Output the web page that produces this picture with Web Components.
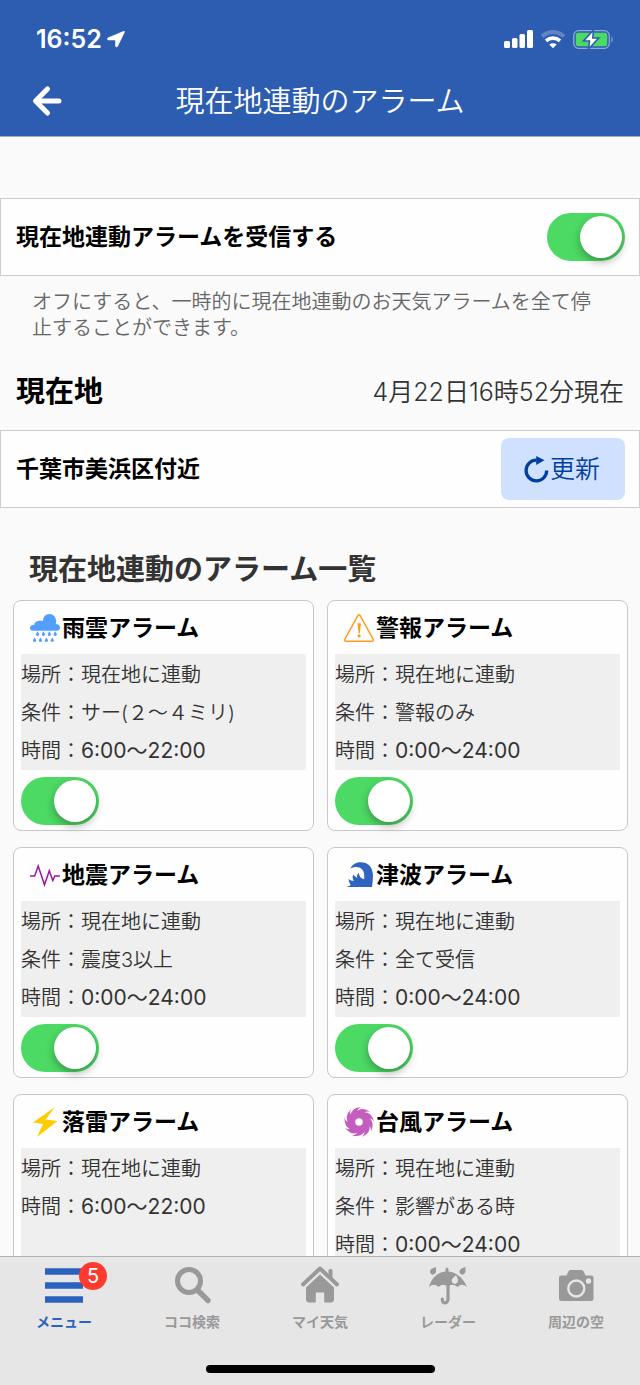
<!DOCTYPE html>
<html lang="ja">
<head>
<meta charset="utf-8">
<meta name="viewport" content="width=device-width, initial-scale=1">
<title>現在地連動のアラーム</title>
<style>
  html, body { margin: 0; height: 100%; }
  body {
    background: #fafafa;
    color: #333;
    font-family: Inter, "Noto Sans CJK JP", sans-serif;
    font-size: 20px;
  }
</style>
</head>
<body>
<alarm-app></alarm-app>

<script>
const ICONS = {
  location: [18, 16, '<path d="M17 .8 10.200 15q-.9.800-1.200-.2V8.500H1.500Q.4 8 1.500 7.200Z" fill="currentColor" stroke="currentColor" stroke-width="1.600" stroke-linejoin="round"/>'],
  back: [30, 30, '<path d="M15.500 3 3.500 15l12 12M4.500 15H27" fill="none" stroke="currentColor" stroke-width="5" stroke-linecap="round" stroke-linejoin="round"/>'],
  signal: [29, 18, '<g fill="currentColor"><rect y="11" width="6" height="7" rx="1.500"/><rect x="8" y="8" width="5.500" height="10" rx="1.500"/><rect x="15.500" y="4" width="5.500" height="14" rx="1.500"/><rect x="23" width="6" height="18" rx="1.500"/></g>'],
  wifi: [26, 18, '<path d="M2 6.500a16 16 0 0 1 22 0" fill="none" stroke="currentColor" stroke-opacity=".25" stroke-width="4"/><path d="M6 10.800a10.500 10.500 0 0 1 14 0" fill="none" stroke="currentColor" stroke-width="3.600"/><path d="M9.300 14.600a5.500 5.500 0 0 1 7.400 0L13 18.200Z" fill="currentColor"/>'],
  battery: [41, 19, '<rect x=".7" y=".7" width="35.600" height="17.600" rx="5" fill="none" stroke="#8ea9d8" stroke-width="1.300"/><path d="M38.500 6q2.500 3.500 0 7Z" fill="#8ea9d8"/><rect x="2.800" y="2.800" width="31.400" height="13.400" rx="2.500" fill="#4cd964"/><path d="M20.500 0 10.500 11h6L15.500 19 25.800 8h-6Z" fill="#fff" stroke="#2c5db1" stroke-width="1.600"/>'],
  refresh: [25, 26, '<path d="M12.500 4.200A10.300 10.300 0 1 0 22.700 14.500" fill="none" stroke="currentColor" stroke-width="3.300"/><path d="M12.200 0 20.500 4.200 12.200 9Z" fill="currentColor"/>'],
  rain: [30, 28, '<g transform="scale(.327 .334)" fill="#529fff"><path d="M9 50Q0 49 0 41q1-9 13-9 1-11 15-12 5-1 11 2Q40 1 60 0q18 1 20 21l-1 9q12 1 13 11-1 9-10 9Z"/><path d="M23 52q6 8 5 11-5 5-10 0 0-4 5-11ZM41 52q6 8 5 11-5 5-10 0 0-4 5-11ZM59 52q6 8 5 11-5 5-10 0 0-4 5-11ZM77 52q6 8 5 11-5 5-10 0 0-4 5-11ZM14 70q6 8 5 11-5 5-10 0 0-4 5-11ZM32 70q6 8 5 11-5 5-10 0 0-4 5-11ZM50 70q6 8 5 11-5 5-10 0 0-4 5-11ZM68 70q6 8 5 11-5 5-10 0 0-4 5-11Z"/></g>'],
  warning: [30, 28, '<path d="M15 .8q.5 0 1 .7l13.300 24q.4 1.600-1 1.700H1.700q-1.400-.1-1-1.700l13.300-24q.5-.7 1-.7Z" fill="none" stroke="#ff9b1c" stroke-width="1.500"/><path d="M13.500 9.500q1.700-1 3.400 0l-.9 9.500h-1.400Z" fill="#ff9b1c"/><circle cx="15.200" cy="21.800" r="1.600" fill="#ff9b1c"/>'],
  quake: [30, 28, '<path d="M0 15h4.700L8.200 5l6.300 18.800 4.800-14 3.500 9.700 2-4.500h5.200" fill="none" stroke="#a0149b" stroke-width="1.500"/>'],
  wave: [30, 28, '<g transform="translate(2 1) scale(.333)"><path d="M0 75H78Q81 58 81 40C80 14 65 1 44 1 29 1 18 9 13 20 26 13 40 14 48 22 57 31 54 43 55 52 45 50 40 43 38 32 33 38 32 43 34 48 28 44 24 40 22 38 18 45 20 51 24 56 18 57 13 55 7 51 9 60 12 66 14 68 10 72 5 74 0 75Z" fill="#3064c0"/></g>'],
  bolt: [30, 30, '<path d="m25 0-9.500 12.500L27.500 14 7 30l6-13L3 15.500Z" fill="#fc0"/>'],
  typhoon: [30, 30, '<g fill="#c45dbd">' +
    [0, 40, 80, 120, 160, 200, 240, 280, 320].map(a => `<path transform="rotate(${a} 15 15)" d="M6 11Q6 1 17 0 11 3 14 8Z"/>`).join('') +
    '</g><circle cx="15" cy="15" r="6.500" fill="none" stroke="#c45dbd" stroke-width="5.500"/>'],
  menu: [40, 38, '<path d="M1 4.500h38M1 18.500h38M1 32.500h38" fill="none" stroke="currentColor" stroke-width="6.600"/>'],
  search: [40, 38, '<g fill="none" stroke="currentColor"><circle cx="17" cy="14" r="11.500" stroke-width="5"/><path d="m26 23.500 10 10" stroke-width="5.400" stroke-linecap="round"/></g>'],
  home: [40, 38, '<path d="m3 17.500 17-16 17 16" fill="none" stroke="currentColor" stroke-width="4" stroke-linecap="round" stroke-linejoin="round"/><path d="M28.500 3q2-2 4 0v8l-4-4ZM20 7.500 34 20.500V32q0 3.500-3.500 3.500H25q-.8 0-.8-1V25.500h-8.400v9q0 1-.8 1H9.500Q6 35.500 6 32V20.500Z" fill="currentColor"/>'],
  umbrella: [40, 38, '<path d="M1 20Q5 6 17.500 4.500V2q1.500-3 3 0v2.500Q33 6 39 20q-5-4.500-9.500 0Q24 15.500 20 20q-5-4.500-9.500 0Q6 15.500 1 20Z" fill="currentColor"/><path d="M20 18v14.500q-.8 4.500-4.500 3-1.200-.5-1.200-3.500" fill="none" stroke="currentColor" stroke-width="3.200" stroke-linecap="round"/><path d="M8 0v5q-2 4-5 2-2.500-3 1-5.500ZM37.500 0v5q-2 4-5 2-2.500-3 1-5.500Z" fill="currentColor"/><path d="M28 8q4 7-.5 9-5-.5-3.500-5Z" fill="#e6e6e6"/>'],
  camera: [40, 38, '<path d="M5 8.500h5.500l1.800-4Q13 3 14.500 3h11q1.500 0 2.200 1.500l1.800 4H35q2.500 0 2.500 2.500v20.500Q37.500 34 35 34H5.500Q3 34 3 31.500V11Q3 8.500 5 8.500Z" fill="currentColor"/><circle cx="20.300" cy="21.500" r="8" fill="none" stroke="#e6e6e6" stroke-width="2.400"/><circle cx="32.500" cy="14" r="2.700" fill="#e6e6e6"/>'],
};

class UiIcon extends HTMLElement {
  connectedCallback() {
    const [w, h, body] = ICONS[this.getAttribute('name')];
    this.attachShadow({ mode: 'open' }).innerHTML = `
      <style>:host { display: block; flex: none; } svg { display: block; overflow: visible; }</style>
      <svg width="${w}" height="${h}" viewBox="0 0 ${w} ${h}" aria-hidden="true">${body}</svg>`;
  }
}
customElements.define('ui-icon', UiIcon);

class ToggleSwitch extends HTMLElement {
  connectedCallback() {
    this.attachShadow({ mode: 'open' }).innerHTML = `
      <style>
        :host { display: block; flex: none; width: 78px; height: 48px; }
        input {
          appearance: none; display: flex; align-items: center; box-sizing: border-box;
          width: 100%; height: 100%; margin: 0; padding: 3px;
          border-radius: 24px; background: #ddd; cursor: pointer;
        }
        input::before {
          content: ""; width: 42px; height: 42px; border-radius: 50%;
          background: #fff; box-shadow: 0 4px 9px rgba(0, 0, 0, .3);
        }
        input:checked { background: #4cd964; justify-content: flex-end; }
      </style>
      <input type="checkbox" role="switch" checked>`;
    this.shadowRoot.querySelector('input').setAttribute('aria-label', this.getAttribute('label'));
  }
}
customElements.define('toggle-switch', ToggleSwitch);

class AppHeader extends HTMLElement {
  connectedCallback() {
    this.attachShadow({ mode: 'open' }).innerHTML = `
      <style>
        :host { display: block; flex: none; background: #2c5db1; color: #fff; border-bottom: 1px solid #a5adbd; }
        .status { display: flex; align-items: center; height: 46px; padding: 16px 26px 4px 36px; }
        .time { font-size: 25px; font-weight: 600; line-height: 46px; margin-right: auto; display: flex; align-items: center; gap: 5px; }
        .system { display: flex; align-items: center; gap: 7px; }
        .nav { display: grid; grid-template-columns: 64px 1fr 64px; align-items: center; height: 70px; }
        button { display: flex; padding: 0 0 0 32px; border: 0; background: none; color: inherit; cursor: pointer; }
        h1 { margin: 0; padding-top: 2px; text-align: center; font-size: 29px; line-height: 40px; font-weight: 350; }
      </style>
      <div class="status">
        <div class="time"><span>16:52</span><ui-icon name="location"></ui-icon></div>
        <div class="system"><ui-icon name="signal"></ui-icon><ui-icon name="wifi"></ui-icon><ui-icon name="battery"></ui-icon></div>
      </div>
      <div class="nav">
        <button type="button" aria-label="戻る"><ui-icon name="back"></ui-icon></button>
        <h1><slot></slot></h1>
      </div>`;
  }
}
customElements.define('app-header', AppHeader);

class SettingRow extends HTMLElement {
  connectedCallback() {
    this.attachShadow({ mode: 'open' }).innerHTML = `
      <style>
        :host {
          display: flex; align-items: center; justify-content: space-between; box-sizing: border-box;
          min-height: 78px; padding: 0 14px 0 15px; border: 1px solid #ccc; background: #fefefe;
          color: #000; font-size: 23px; line-height: 32px; font-weight: 700;
        }
      </style>
      <slot></slot><slot name="action"></slot>`;
  }
}
customElements.define('setting-row', SettingRow);

class RefreshButton extends HTMLElement {
  connectedCallback() {
    this.attachShadow({ mode: 'open' }).innerHTML = `
      <style>
        :host { display: block; }
        button {
          display: flex; align-items: center; justify-content: center; gap: 1px;
          width: 124px; height: 62px; padding: 0 2px 0 0; border: 0; border-radius: 8px;
          background: #d0e1ff; color: #003f9e; font: 350 25px/36px Inter, "Noto Sans CJK JP", sans-serif; cursor: pointer;
        }
      </style>
      <button type="button"><ui-icon name="refresh"></ui-icon><slot></slot></button>`;
  }
}
customElements.define('refresh-button', RefreshButton);

class AlarmCard extends HTMLElement {
  connectedCallback() {
    const title = this.getAttribute('heading');
    this.attachShadow({ mode: 'open' }).innerHTML = `
      <style>
        :host {
          display: flex; flex-direction: column; min-width: 0; box-sizing: border-box;
          padding: 0 7px 5px; border: 1px solid #c8c8c8; border-radius: 8px; background: #fefefe;
        }
        h3 {
          display: flex; align-items: center; gap: 2px; margin: 0; padding-left: 9px;
          height: 53px; color: #000; font-size: 23px; line-height: 32px; font-weight: 700;
        }
        .details { flex: 1; margin-bottom: 7px; padding-top: 2px; background: #efefef; font-weight: 350; line-height: 38px; }
        ::slotted(div) { height: 38px; }
      </style>
      <h3><ui-icon name="${this.getAttribute('icon')}"></ui-icon>${title}</h3>
      <div class="details"><slot></slot></div>
      <toggle-switch label="${title}"></toggle-switch>`;
  }
}
customElements.define('alarm-card', AlarmCard);

class TabItem extends HTMLElement {
  connectedCallback() {
    const badge = this.getAttribute('badge');
    this.attachShadow({ mode: 'open' }).innerHTML = `
      <style>
        :host { display: block; color: #999; }
        :host([current]) { color: #2b62c0; }
        a {
          display: flex; flex-direction: column; align-items: center; gap: 7px; padding-top: 10px;
          color: inherit; text-decoration: none; font-size: 14px; line-height: 20px; font-weight: 700;
        }
        .icon { position: relative; }
        .badge {
          position: absolute; left: 35px; top: -5px; width: 28px; height: 28px; border-radius: 50%;
          background: #ff3b30; color: #fff; text-align: center; font-size: 20px; line-height: 28px; font-weight: 400;
        }
      </style>
      <a href="#${this.getAttribute('icon')}">
        <span class="icon"><ui-icon name="${this.getAttribute('icon')}"></ui-icon>${badge ? `<span class="badge">${badge}</span>` : ''}</span>
        <slot></slot>
      </a>`;
  }
}
customElements.define('tab-item', TabItem);

class TabBar extends HTMLElement {
  connectedCallback() {
    this.attachShadow({ mode: 'open' }).innerHTML = `
      <style>
        :host { display: block; flex: none; background: #e6e6e6; border-top: 1px solid #b2b2b2; }
        nav { display: grid; grid-template-columns: repeat(5, 1fr); height: 108px; }
        .indicator { width: 229px; height: 8px; margin: 0 auto 12px; border-radius: 4px; background: #000; }
      </style>
      <nav><slot></slot></nav>
      <div class="indicator"></div>`;
  }
}
customElements.define('tab-bar', TabBar);

class AlarmApp extends HTMLElement {
  connectedCallback() {
    this.attachShadow({ mode: 'open' }).innerHTML = `
      <style>
        :host { display: flex; flex-direction: column; height: 100vh; }
        main { flex: 1; min-height: 0; overflow-y: auto; scrollbar-width: none; padding-top: 61px; }
        .note { margin: 0; padding: 13px 32px; color: #666; font-weight: 350; line-height: 26px; }
        .place { display: flex; align-items: center; justify-content: space-between; height: 76px; padding: 0 16px; }
        .place h2 { margin: 0; color: #000; font-size: 29px; line-height: 40px; }
        .place time { font-size: 25px; line-height: 36px; font-weight: 350; }
        .list { margin: 32px 0 0; padding: 0 29px; font-size: 29px; line-height: 60px; }
        .cards { display: grid; grid-template-columns: 1fr 1fr; gap: 16px 13px; padding: 0 12px 16px 13px; }
        .hours { font-size: 21px; font-weight: 400; }
      </style>
      <app-header>現在地連動のアラーム</app-header>
      <main>
        <setting-row>現在地連動アラームを受信する<toggle-switch slot="action" label="現在地連動アラームを受信する"></toggle-switch></setting-row>
        <p class="note">オフにすると、一時的に現在地連動のお天気アラームを全て停止することができます。</p>
        <div class="place"><h2>現在地</h2><time>4月22日16時52分現在</time></div>
        <setting-row>千葉市美浜区付近<refresh-button slot="action">更新</refresh-button></setting-row>
        <h2 class="list">現在地連動のアラーム一覧</h2>
        <div class="cards">
          <alarm-card icon="rain" heading="雨雲アラーム"><div>場所：現在地に連動</div><div>条件：サー(２〜４ミリ)</div><div>時間：<span class="hours">6:00〜22:00</span></div></alarm-card>
          <alarm-card icon="warning" heading="警報アラーム"><div>場所：現在地に連動</div><div>条件：警報のみ</div><div>時間：<span class="hours">0:00〜24:00</span></div></alarm-card>
          <alarm-card icon="quake" heading="地震アラーム"><div>場所：現在地に連動</div><div>条件：震度3以上</div><div>時間：<span class="hours">0:00〜24:00</span></div></alarm-card>
          <alarm-card icon="wave" heading="津波アラーム"><div>場所：現在地に連動</div><div>条件：全て受信</div><div>時間：<span class="hours">0:00〜24:00</span></div></alarm-card>
          <alarm-card icon="bolt" heading="落雷アラーム"><div>場所：現在地に連動</div><div>時間：<span class="hours">6:00〜22:00</span></div></alarm-card>
          <alarm-card icon="typhoon" heading="台風アラーム"><div>場所：現在地に連動</div><div>条件：影響がある時</div><div>時間：<span class="hours">0:00〜24:00</span></div></alarm-card>
        </div>
      </main>
      <tab-bar>
        <tab-item icon="menu" badge="5" current>メニュー</tab-item>
        <tab-item icon="search">ココ検索</tab-item>
        <tab-item icon="home">マイ天気</tab-item>
        <tab-item icon="umbrella">レーダー</tab-item>
        <tab-item icon="camera">周辺の空</tab-item>
      </tab-bar>`;
  }
}
customElements.define('alarm-app', AlarmApp);
</script>
</body>
</html>
